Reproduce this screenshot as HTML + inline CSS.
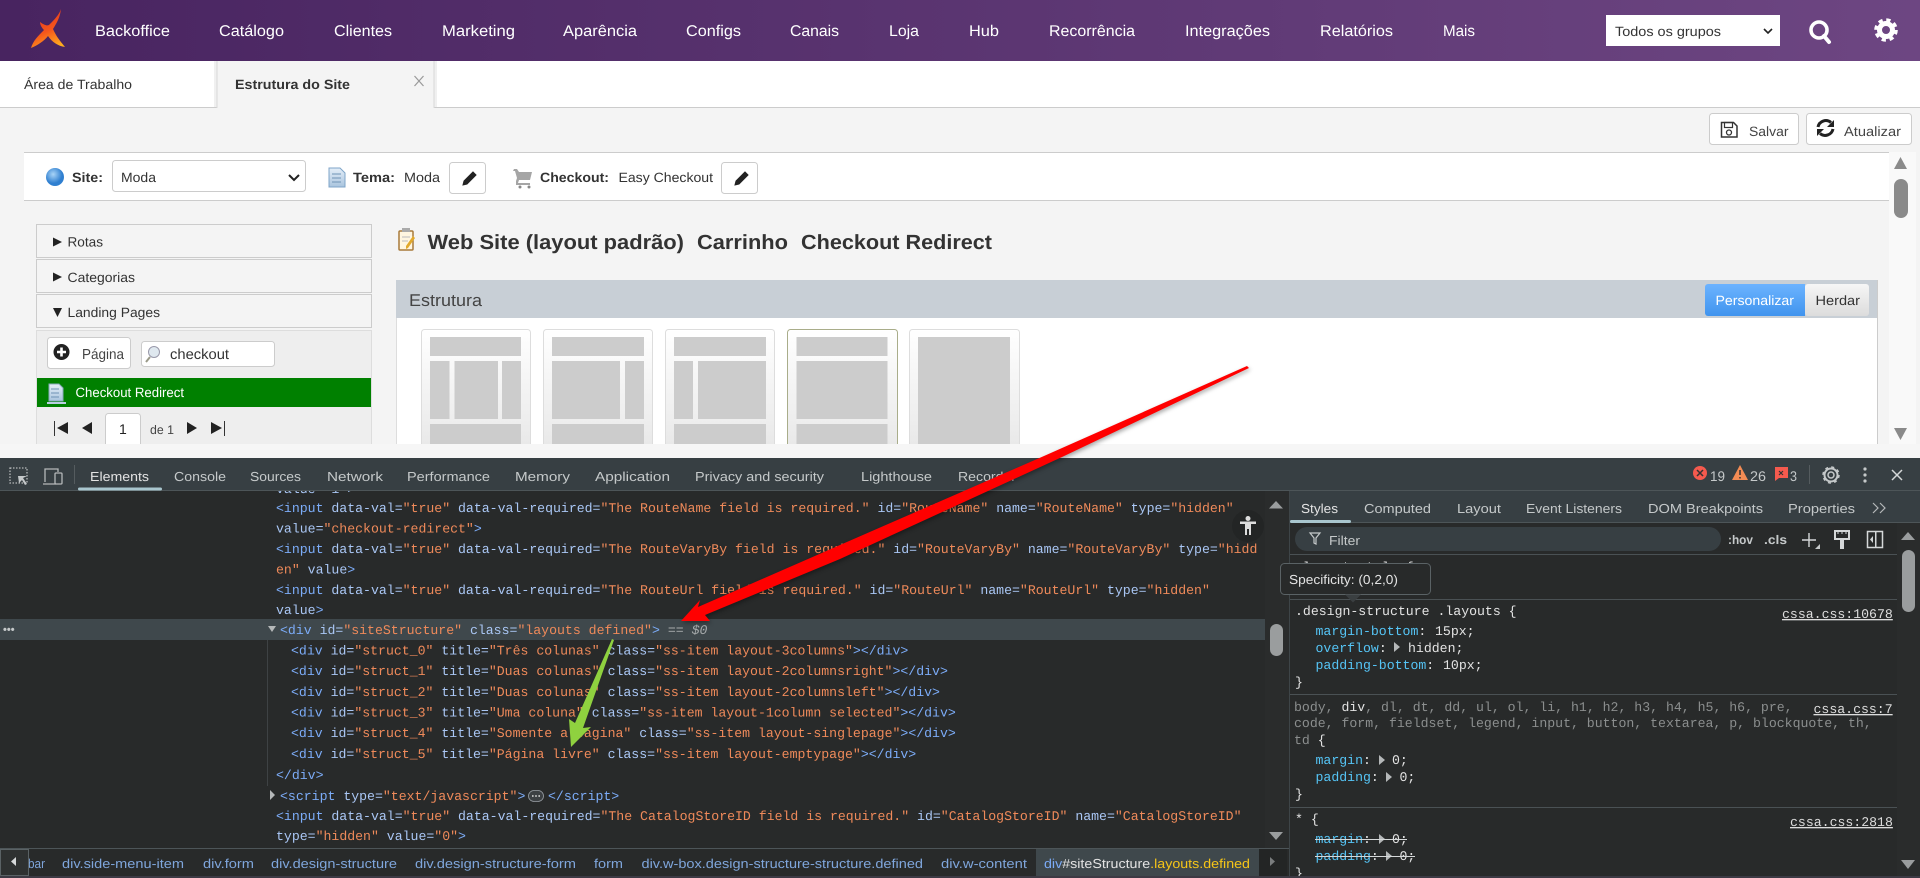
<!DOCTYPE html>
<html lang="pt"><head><meta charset="utf-8"><title>Estrutura do Site</title>
<style>
html,body{margin:0;padding:0;background:#f4f4f4;overflow:hidden}
svg{display:block;text-rendering:geometricPrecision}
text{font-family:"Liberation Sans",sans-serif;white-space:pre}
.n{fill:#fff;font-size:15.5px}
.d{fill:#333;font-size:13.5px}
.db{fill:#333;font-size:13.5px;font-weight:bold}
.t{fill:#c5c9ca;font-size:13px}
.c{fill:#7fa6dc;font-size:13px}
.m{font-family:"Liberation Mono",monospace;font-size:13.2px;fill:#aac7f5}
.b{fill:#7cacf8}.o{fill:#ef8a5a}.w{fill:#e3e3e3}.p{fill:#55c4f5}.g{fill:#8b8e8e}
.l{fill:#ddd;text-decoration:underline}
</style></head><body>
<svg xmlns="http://www.w3.org/2000/svg" width="1920" height="878" viewBox="0 0 1920 878">
<defs>
<linearGradient id="top" x1="0" x2="1" y1="0" y2="0"><stop offset="0" stop-color="#482460"/><stop offset="1" stop-color="#6d4682"/></linearGradient>
<linearGradient id="card" x1="0" x2="0" y1="0" y2="1"><stop offset="0" stop-color="#fff"/><stop offset="1" stop-color="#e6e6e6"/></linearGradient>
<linearGradient id="blue" x1="0" x2="0" y1="0" y2="1"><stop offset="0" stop-color="#6cb3ff"/><stop offset="1" stop-color="#4094ee"/></linearGradient>
<linearGradient id="grey" x1="0" x2="0" y1="0" y2="1"><stop offset="0" stop-color="#f6f6f6"/><stop offset="1" stop-color="#dcdcdc"/></linearGradient>
<linearGradient id="fl" x1=".3" x2=".7" y1="0" y2="1"><stop offset="0" stop-color="#e5341c"/><stop offset=".55" stop-color="#f4561c"/><stop offset="1" stop-color="#ffae1e"/></linearGradient>
<radialGradient id="globe" cx=".4" cy=".35"><stop offset="0" stop-color="#a9d4f7"/><stop offset="1" stop-color="#2f7fd0"/></radialGradient>
<linearGradient id="docg" x1="0" x2="0" y1="0" y2="1"><stop offset="0" stop-color="#e4eef8"/><stop offset="1" stop-color="#a9c4de"/></linearGradient>
</defs>

<!-- page -->
<rect width="1920" height="878" fill="#f4f4f4"/>
<rect width="1920" height="61" fill="url(#top)"/>
<path d="M61 9C60 18 56 24 53 29C56 36 60 41 65 47C58 46 52 42 48 36C44 41 38 45 31 48C33 41 38 36 44 30C42 28 40 25 40 22C44 25 47 26 49 25C54 20 59 15 61 9Z" fill="url(#fl)"/>
<g class="nav">
<text class="n" x="95" y="36" textLength="75" lengthAdjust="spacingAndGlyphs">Backoffice</text>
<text class="n" x="219" y="36" textLength="65" lengthAdjust="spacingAndGlyphs">Catálogo</text>
<text class="n" x="334" y="36" textLength="58" lengthAdjust="spacingAndGlyphs">Clientes</text>
<text class="n" x="442" y="36" textLength="73" lengthAdjust="spacingAndGlyphs">Marketing</text>
<text class="n" x="563" y="36" textLength="74" lengthAdjust="spacingAndGlyphs">Aparência</text>
<text class="n" x="686" y="36" textLength="55" lengthAdjust="spacingAndGlyphs">Configs</text>
<text class="n" x="790" y="36" textLength="49" lengthAdjust="spacingAndGlyphs">Canais</text>
<text class="n" x="889" y="36" textLength="30" lengthAdjust="spacingAndGlyphs">Loja</text>
<text class="n" x="969" y="36" textLength="30" lengthAdjust="spacingAndGlyphs">Hub</text>
<text class="n" x="1049" y="36" textLength="86" lengthAdjust="spacingAndGlyphs">Recorrência</text>
<text class="n" x="1185" y="36" textLength="85" lengthAdjust="spacingAndGlyphs">Integrações</text>
<text class="n" x="1320" y="36" textLength="73" lengthAdjust="spacingAndGlyphs">Relatórios</text>
<text class="n" x="1443" y="36" textLength="32" lengthAdjust="spacingAndGlyphs">Mais</text>
</g>
<rect x="1606" y="15" width="174" height="31" fill="#fff"/>
<text x="1615" y="36" font-size="13.5" fill="#333" textLength="106" lengthAdjust="spacingAndGlyphs">Todos os grupos</text>
<path d="M1764 29l4 4 4-4" fill="none" stroke="#222" stroke-width="1.6"/>
<circle cx="1819" cy="30" r="8" fill="none" stroke="#fff" stroke-width="3.6"/>
<path d="M1824 36l5 6" stroke="#fff" stroke-width="4" stroke-linecap="round"/>
<circle cx="1886" cy="30" r="6.5" fill="none" stroke="#fff" stroke-width="5"/>
<circle cx="1886" cy="30" r="10" fill="none" stroke="#fff" stroke-width="3.6" stroke-dasharray="4.2 3.65"/>

<!-- tab strip -->
<rect y="61" width="1920" height="46" fill="#fff"/>
<rect y="107" width="1920" height="1" fill="#ccc"/>
<text x="24" y="89" font-size="13.5" fill="#333" textLength="108" lengthAdjust="spacingAndGlyphs">Área de Trabalho</text>
<rect x="214" y="61" width="3" height="46" fill="#f0f0f0"/><rect x="434" y="61" width="3" height="46" fill="#f0f0f0"/>
<rect x="217" y="61" width="217" height="48" fill="#f4f4f4"/>
<rect x="216.500" y="61" width="1" height="47" fill="#d8d8d8"/><rect x="433.500" y="61" width="1" height="47" fill="#d8d8d8"/>
<text class="db" x="235" y="89" textLength="115" lengthAdjust="spacingAndGlyphs">Estrutura do Site</text>
<path d="M414.500 76l9 10m0-10l-9 10" stroke="#999" stroke-width="1.200"/>

<!-- save buttons -->
<rect x="1709.500" y="113.500" width="89" height="31" rx="3" fill="#fff" stroke="#ccc"/>
<rect x="1806.500" y="113.500" width="105" height="31" rx="3" fill="#fff" stroke="#ccc"/>
<path d="M1721.500 122.500h12l3.500 3.500v11h-15.500z" fill="none" stroke="#333" stroke-width="1.500"/>
<rect x="1724.500" y="122.500" width="8" height="5" fill="none" stroke="#333" stroke-width="1.200"/>
<circle cx="1729" cy="132.500" r="2.500" fill="none" stroke="#333" stroke-width="1.300"/>
<path d="M1818 127a8 8 0 0 1 13-4.500" fill="none" stroke="#222" stroke-width="3"/><path d="M1834 120v7h-7z" fill="#222"/>
<path d="M1833 129a8 8 0 0 1-13 4.500" fill="none" stroke="#222" stroke-width="3"/><path d="M1817 136v-7h7z" fill="#222"/>
<text x="1749" y="136" font-size="13.5" fill="#444" textLength="39.500" lengthAdjust="spacingAndGlyphs">Salvar</text>
<text x="1844" y="136" font-size="13.5" fill="#444" textLength="57" lengthAdjust="spacingAndGlyphs">Atualizar</text>

<!-- site panel -->
<rect x="24" y="152" width="1866" height="48" fill="#fff"/>
<rect x="24" y="152" width="1866" height="1" fill="#ccc"/><rect x="24" y="200" width="1866" height="1" fill="#ccc"/>
<rect x="1889" y="152" width="27" height="292" fill="#f9f9f9"/>
<circle cx="55" cy="177" r="9" fill="url(#globe)"/>
<text class="db" x="72" y="182" textLength="31" lengthAdjust="spacingAndGlyphs">Site:</text>
<rect x="112.500" y="160.500" width="193" height="31" rx="3" fill="#fff" stroke="#ccc"/>
<text class="d" x="121" y="182" textLength="35" lengthAdjust="spacingAndGlyphs">Moda</text>
<path d="M289 175l5 5 5-5" fill="none" stroke="#222" stroke-width="2"/>
<path d="M329 168h11l5 5v14h-16z" fill="url(#docg)" stroke="#7fa5c8"/><path d="M332 174h9M332 178h9M332 182h9" stroke="#6f93b5"/>
<text class="db" x="353" y="182" textLength="42" lengthAdjust="spacingAndGlyphs">Tema:</text>
<text class="d" x="404" y="182" textLength="36" lengthAdjust="spacingAndGlyphs">Moda</text>
<rect x="449.500" y="162.500" width="36" height="31" rx="3" fill="#fff" stroke="#ccc"/>
<path d="M473 172l3 3-9 9-4 1 1-4z" fill="#222" stroke="#222"/>
<path d="M514 169h3l2 3h13l-2 8h-11l-1 3h12v2h-14v-4l1-3-2-7h-2z" fill="#a5a5a5"/><circle cx="520" cy="187" r="1.500" fill="#888"/><circle cx="529" cy="187" r="1.500" fill="#888"/>
<text class="db" x="540" y="182" textLength="69" lengthAdjust="spacingAndGlyphs">Checkout:</text>
<text class="d" x="618.500" y="182" textLength="94.500" lengthAdjust="spacingAndGlyphs">Easy Checkout</text>
<rect x="721.500" y="162.500" width="36" height="31" rx="3" fill="#fff" stroke="#ccc"/>
<path d="M745 172l3 3-9 9-4 1 1-4z" fill="#222" stroke="#222"/>
<path d="M1894 169l6.500-12 6.500 12z" fill="#8a8a8a"/>
<rect x="1894" y="179" width="14" height="39" rx="7" fill="#8a8a8a"/>
<path d="M1894 428l6.500 12 6.500-12z" fill="#8a8a8a"/>

<!-- sidebar -->
<rect x="36.500" y="224.500" width="335" height="33" fill="#f4f4f4" stroke="#ccc"/>
<rect x="36.500" y="259.500" width="335" height="33" fill="#f4f4f4" stroke="#ccc"/>
<rect x="36.500" y="294.500" width="335" height="33" fill="#f4f4f4" stroke="#ccc"/>
<path d="M53 237.500l9 4.500-9 4.500z" fill="#222"/><path d="M53 272.500l9 4.500-9 4.500z" fill="#222"/><path d="M53 308l9 0-4.500 9z" fill="#222"/>
<text class="d" x="67.500" y="246.500" textLength="35.500" lengthAdjust="spacingAndGlyphs">Rotas</text>
<text class="d" x="67.500" y="282" textLength="67.500" lengthAdjust="spacingAndGlyphs">Categorias</text>
<text class="d" x="67.500" y="317" textLength="92.500" lengthAdjust="spacingAndGlyphs">Landing Pages</text>
<rect x="36.500" y="330.500" width="335" height="120" fill="#eee" stroke="#ddd"/>
<rect x="47.500" y="337.500" width="83" height="31" rx="3" fill="#fff" stroke="#ccc"/>
<circle cx="61.500" cy="352" r="8" fill="#222"/><path d="M57 352h9M61.500 347.500v9" stroke="#fff" stroke-width="2.600"/>
<text x="82" y="359" font-size="14.500" fill="#444" textLength="42" lengthAdjust="spacingAndGlyphs">Página</text>
<rect x="141.500" y="341.500" width="133" height="25" rx="3" fill="#fff" stroke="#ccc"/>
<circle cx="154" cy="352" r="5.500" fill="#dfe8ef" stroke="#99a"/><path d="M150 357l-4 5" stroke="#998" stroke-width="2"/>
<text x="170" y="359" font-size="14.500" fill="#333" textLength="59" lengthAdjust="spacingAndGlyphs">checkout</text>
<rect x="37" y="378" width="334" height="29" fill="#008000"/>
<path d="M49 384h10l4 4v13h-14z" fill="url(#docg)" stroke="#8ab"/><path d="M47 402h19v2h-19z" fill="#b9cfe0"/><path d="M51 389h8M51 393h8M51 397h8" stroke="#6f93b5"/>
<text x="75.500" y="397" font-size="13.500" fill="#fff" textLength="108.500" lengthAdjust="spacingAndGlyphs">Checkout Redirect</text>
<path d="M54.500 421v15" stroke="#333"/><path d="M68 422v12l-11-6z" fill="#222"/><path d="M92 422v12l-10-6z" fill="#222"/>
<rect x="105.500" y="413.500" width="35" height="40" rx="3" fill="#fff" stroke="#ccc"/>
<text x="119" y="434" font-size="14" fill="#222">1</text>
<text x="150" y="434" font-size="12.500" fill="#444" textLength="24" lengthAdjust="spacingAndGlyphs">de 1</text>
<path d="M187 422v12l10-6z" fill="#222"/><path d="M211 422v12l11-6z" fill="#222"/><path d="M224.500 421v15" stroke="#333"/>

<!-- main -->
<rect x="399" y="231" width="14" height="19" rx="1" fill="#fff6e0" stroke="#a87a3a" stroke-width="1.500"/>
<rect x="402" y="228" width="8" height="4" fill="#aaa"/><path d="M402 237h8M402 241h6" stroke="#bbb"/><path d="M415 238l-7 10-2 1 0-3 7-10z" fill="#e2a92c"/>
<text x="427.500" y="249" font-size="20.500" font-weight="bold" fill="#333" textLength="256.500" lengthAdjust="spacingAndGlyphs">Web Site (layout padrão)</text>
<text x="697" y="249" font-size="20.500" font-weight="bold" fill="#333" textLength="91" lengthAdjust="spacingAndGlyphs">Carrinho</text>
<text x="801" y="249" font-size="20.500" font-weight="bold" fill="#333" textLength="191" lengthAdjust="spacingAndGlyphs">Checkout Redirect</text>
<rect x="396" y="280" width="1481" height="170" fill="#fff"/>
<rect x="396" y="280" width="1481" height="38" fill="#c8cfd6"/>
<rect x="1877" y="280" width="1" height="170" fill="#ccc"/><rect x="396" y="318" width="1" height="130" fill="#ddd"/>
<text x="409" y="306" font-size="17" fill="#444" textLength="73" lengthAdjust="spacingAndGlyphs">Estrutura</text>
<rect x="1805" y="284" width="64" height="32" rx="3" fill="url(#grey)"/>
<path d="M1708 284h97v32h-97a3 3 0 0 1-3-3v-26a3 3 0 0 1 3-3z" fill="url(#blue)"/>
<text x="1715.500" y="305" font-size="13.500" fill="#fff" textLength="78.500" lengthAdjust="spacingAndGlyphs">Personalizar</text>
<text x="1815.500" y="305" font-size="13.500" fill="#333" textLength="44.500" lengthAdjust="spacingAndGlyphs">Herdar</text>

<g stroke="#ddd" fill="url(#card)">
<rect x="421.500" y="329.500" width="109" height="130" rx="3"/>
<rect x="543.500" y="329.500" width="109" height="130" rx="3"/>
<rect x="665.500" y="329.500" width="109" height="130" rx="3"/>
<rect x="787.500" y="329.500" width="110" height="130" rx="3" stroke="#a9ad8a"/>
<rect x="909.500" y="329.500" width="110" height="130" rx="3"/>
</g>
<g fill="#ccc">
<rect x="430" y="337" width="91" height="19"/><rect x="430" y="361" width="19.500" height="58"/><rect x="454.500" y="361" width="43.500" height="58"/><rect x="502" y="361" width="19" height="58"/><rect x="430" y="424" width="91" height="25"/>
<rect x="552" y="337" width="92" height="19"/><rect x="552" y="361" width="68" height="58"/><rect x="625" y="361" width="19" height="58"/><rect x="552" y="424" width="92" height="25"/>
<rect x="674" y="337" width="92" height="19"/><rect x="674" y="361" width="19" height="58"/><rect x="698" y="361" width="68" height="58"/><rect x="674" y="424" width="92" height="25"/>
<rect x="796.500" y="337" width="91" height="19"/><rect x="796.500" y="361" width="91" height="58"/><rect x="796.500" y="424" width="91" height="25"/>
<rect x="918" y="337" width="92" height="112"/>
</g>
<rect y="444" width="1889" height="14" fill="#f6f6f6"/>
<rect x="1889" y="444" width="31" height="14" fill="#f6f6f6"/>

<!-- devtools -->
<rect y="458" width="1920" height="420" fill="#282a2a"/>
<rect x="0" y="619" width="1265" height="21" fill="#3f484c"/>
<rect x="267" y="640" width="1" height="146" fill="#3e4244"/>
<text x="3" y="633" font-size="11" fill="#c5c9ca" font-weight="bold">•••</text>
<g class="code">
<text class="m" x="276" y="493">value="1"&gt;</text>
<text class="m" x="276" y="512"><tspan class="b">&lt;input</tspan> data-val=<tspan class="o">"true"</tspan> data-val-required=<tspan class="o">"The RouteName field is required."</tspan> id=<tspan class="o">"RouteName"</tspan> name=<tspan class="o">"RouteName"</tspan> type=<tspan class="o">"hidden"</tspan></text>
<text class="m" x="276" y="532.500">value=<tspan class="o">"checkout-redirect"</tspan><tspan class="b">&gt;</tspan></text>
<text class="m" x="276" y="553"><tspan class="b">&lt;input</tspan> data-val=<tspan class="o">"true"</tspan> data-val-required=<tspan class="o">"The RouteVaryBy field is required."</tspan> id=<tspan class="o">"RouteVaryBy"</tspan> name=<tspan class="o">"RouteVaryBy"</tspan> type=<tspan class="o">"hidd</tspan></text>
<text class="m" x="276" y="573.500"><tspan class="o">en"</tspan> value<tspan class="b">&gt;</tspan></text>
<text class="m" x="276" y="594"><tspan class="b">&lt;input</tspan> data-val=<tspan class="o">"true"</tspan> data-val-required=<tspan class="o">"The RouteUrl field is required."</tspan> id=<tspan class="o">"RouteUrl"</tspan> name=<tspan class="o">"RouteUrl"</tspan> type=<tspan class="o">"hidden"</tspan></text>
<text class="m" x="276" y="614">value<tspan class="b">&gt;</tspan></text>
<path d="M268 626h8l-4 6z" fill="#b5b8b9"/>
<text class="m" x="280" y="634"><tspan class="b">&lt;div</tspan> id=<tspan class="o">"siteStructure"</tspan> class=<tspan class="o">"layouts defined"</tspan><tspan class="b">&gt;</tspan> <tspan fill="#a8acad">==</tspan> <tspan fill="#a8acad" font-style="italic">$0</tspan></text>
<text class="m" x="291" y="654.500"><tspan class="b">&lt;div</tspan> id=<tspan class="o">"struct_0"</tspan> title=<tspan class="o">"Três colunas"</tspan> class=<tspan class="o">"ss-item layout-3columns"</tspan><tspan class="b">&gt;&lt;/div&gt;</tspan></text>
<text class="m" x="291" y="675"><tspan class="b">&lt;div</tspan> id=<tspan class="o">"struct_1"</tspan> title=<tspan class="o">"Duas colunas"</tspan> class=<tspan class="o">"ss-item layout-2columnsright"</tspan><tspan class="b">&gt;&lt;/div&gt;</tspan></text>
<text class="m" x="291" y="696"><tspan class="b">&lt;div</tspan> id=<tspan class="o">"struct_2"</tspan> title=<tspan class="o">"Duas colunas"</tspan> class=<tspan class="o">"ss-item layout-2columnsleft"</tspan><tspan class="b">&gt;&lt;/div&gt;</tspan></text>
<text class="m" x="291" y="716.500"><tspan class="b">&lt;div</tspan> id=<tspan class="o">"struct_3"</tspan> title=<tspan class="o">"Uma coluna"</tspan> class=<tspan class="o">"ss-item layout-1column selected"</tspan><tspan class="b">&gt;&lt;/div&gt;</tspan></text>
<text class="m" x="291" y="737"><tspan class="b">&lt;div</tspan> id=<tspan class="o">"struct_4"</tspan> title=<tspan class="o">"Somente a página"</tspan> class=<tspan class="o">"ss-item layout-singlepage"</tspan><tspan class="b">&gt;&lt;/div&gt;</tspan></text>
<text class="m" x="291" y="758"><tspan class="b">&lt;div</tspan> id=<tspan class="o">"struct_5"</tspan> title=<tspan class="o">"Página livre"</tspan> class=<tspan class="o">"ss-item layout-emptypage"</tspan><tspan class="b">&gt;&lt;/div&gt;</tspan></text>
<text class="m b" x="276" y="779">&lt;/div&gt;</text>
<path d="M270 790v10l5-5z" fill="#b5b8b9"/>
<text class="m" x="280" y="800"><tspan class="b">&lt;script</tspan> type=<tspan class="o">"text/javascript"</tspan><tspan class="b">&gt;</tspan></text>
<rect x="528.500" y="790.500" width="15" height="11" rx="5.500" fill="#3c4043" stroke="#9aa0a6" stroke-width=".8"/>
<path d="M532 796h8" stroke="#ddd" stroke-width="1.600" stroke-dasharray="1.600 1.600"/>
<text class="m b" x="548" y="800">&lt;/script&gt;</text>
<text class="m" x="276" y="820"><tspan class="b">&lt;input</tspan> data-val=<tspan class="o">"true"</tspan> data-val-required=<tspan class="o">"The CatalogStoreID field is required."</tspan> id=<tspan class="o">"CatalogStoreID"</tspan> name=<tspan class="o">"CatalogStoreID"</tspan></text>
<text class="m" x="276" y="840">type=<tspan class="o">"hidden"</tspan> value=<tspan class="o">"0"</tspan><tspan class="b">&gt;</tspan></text>
</g>
<!-- element scrollbar -->
<rect x="1265" y="491" width="24" height="357" fill="#2a2c2c"/>
<path d="M1269 508.500l7-7.500 7 7.500z" fill="#9a9d9e"/><rect x="1270" y="624" width="13" height="32" rx="6.500" fill="#9a9d9e"/><path d="M1269 832l7 8 7-8z" fill="#9a9d9e"/>
<circle cx="1248" cy="526" r="16" fill="#232525"/>
<circle cx="1248" cy="518.500" r="2.500" fill="#ddd"/><path d="M1240 521.500h16v2.500h-5v11h-2v-6h-2v6h-2v-11h-5z" fill="#ddd"/>

<!-- tab bar -->
<rect y="458" width="1920" height="32" fill="#373f43"/>
<rect y="490" width="1920" height="1" fill="#4d5558"/>
<rect x="78" y="487.500" width="84" height="3" rx="1.500" fill="#a9c6ce"/>
<rect x="10" y="468" width="17" height="15" fill="none" stroke="#b5b8b9" stroke-dasharray="1.500 1.500" stroke-width="1.300"/>
<path d="M18 476l9 0-4 2 4 6-2 1-3-5-3 3z" fill="#c5c9ca"/>
<path d="M45 482v-13h13v3M43 484h13" fill="none" stroke="#b5b8b9" stroke-width="1.300"/><rect x="55" y="473" width="7" height="11" rx="1" fill="none" stroke="#b5b8b9" stroke-width="1.300"/>
<rect x="74" y="465" width="1" height="19" fill="#555c5f"/>
<text class="t" x="90" y="481" textLength="59" lengthAdjust="spacingAndGlyphs" style="fill:#e3e3e3">Elements</text>
<text class="t" x="174" y="481" textLength="52" lengthAdjust="spacingAndGlyphs">Console</text>
<text class="t" x="250" y="481" textLength="51" lengthAdjust="spacingAndGlyphs">Sources</text>
<text class="t" x="327" y="481" textLength="56" lengthAdjust="spacingAndGlyphs">Network</text>
<text class="t" x="407" y="481" textLength="83" lengthAdjust="spacingAndGlyphs">Performance</text>
<text class="t" x="515" y="481" textLength="55" lengthAdjust="spacingAndGlyphs">Memory</text>
<text class="t" x="595" y="481" textLength="75" lengthAdjust="spacingAndGlyphs">Application</text>
<text class="t" x="695" y="481" textLength="129" lengthAdjust="spacingAndGlyphs">Privacy and security</text>
<text class="t" x="861" y="481" textLength="71" lengthAdjust="spacingAndGlyphs">Lighthouse</text>
<text class="t" x="958" y="481" textLength="58" lengthAdjust="spacingAndGlyphs">Recorder</text>

<circle cx="1700" cy="473" r="7" fill="#f55a4e"/><path d="M1697 470l6 6m0-6l-6 6" stroke="#333" stroke-width="1.500"/>
<text class="t" x="1710" y="481" style="font-size:14px" textLength="15" lengthAdjust="spacingAndGlyphs">19</text>
<path d="M1740 465l8 15h-16z" fill="#f28b54"/><path d="M1740 470v5m0 2v1.500" stroke="#333" stroke-width="1.500"/>
<text class="t" x="1750" y="481" style="font-size:14px" textLength="16" lengthAdjust="spacingAndGlyphs">26</text>
<path d="M1775 467h13v11h-9l-4 3z" fill="#f55a4e"/><path d="M1779 471l4 4m0-4l-4 4" stroke="#333" stroke-width="1.200"/>
<text class="t" x="1790" y="481" style="font-size:14px" textLength="7" lengthAdjust="spacingAndGlyphs">3</text>
<rect x="1809" y="465" width="1" height="19" fill="#555c5f"/>
<circle cx="1831" cy="475" r="3" fill="none" stroke="#c5c9ca" stroke-width="1.500"/><circle cx="1831" cy="475" r="6.500" fill="none" stroke="#c5c9ca" stroke-width="2"/><circle cx="1831" cy="475" r="8" fill="none" stroke="#c5c9ca" stroke-width="1.500" stroke-dasharray="3 3.280"/>
<circle cx="1865" cy="469" r="1.600" fill="#c5c9ca"/><circle cx="1865" cy="475" r="1.600" fill="#c5c9ca"/><circle cx="1865" cy="481" r="1.600" fill="#c5c9ca"/>
<path d="M1892 470l10 10m0-10l-10 10" stroke="#d5d8d9" stroke-width="1.500"/>

<!-- styles pane -->
<rect x="1289" y="491" width="631" height="385" fill="#282a2a"/>
<rect x="1289" y="491" width="1" height="385" fill="#3e4548"/>
<rect x="1290" y="491" width="630" height="31" fill="#373f43"/>
<rect x="1290" y="522" width="630" height="1" fill="#4d5558"/>
<rect x="1290" y="520" width="61" height="3" rx="1.500" fill="#a9c6ce"/>
<text class="t" x="1301" y="513" textLength="37" lengthAdjust="spacingAndGlyphs" style="fill:#e3e3e3">Styles</text>
<text class="t" x="1364" y="513" textLength="67" lengthAdjust="spacingAndGlyphs">Computed</text>
<text class="t" x="1457" y="513" textLength="44" lengthAdjust="spacingAndGlyphs">Layout</text>
<text class="t" x="1526" y="513" textLength="96" lengthAdjust="spacingAndGlyphs">Event Listeners</text>
<text class="t" x="1648" y="513" textLength="115" lengthAdjust="spacingAndGlyphs">DOM Breakpoints</text>
<text class="t" x="1788" y="513" textLength="67" lengthAdjust="spacingAndGlyphs">Properties</text>
<path d="M1873 503l5 5-5 5m7-10l5 5-5 5" fill="none" stroke="#b5b8b9" stroke-width="1.200"/>
<rect x="1295" y="527" width="426" height="24" rx="12" fill="#373f43"/>
<path d="M1310 533h10l-4 5v6l-2-1v-5z" fill="none" stroke="#c5c9ca" stroke-width="1.200"/>
<text class="t" x="1329" y="545" textLength="31" lengthAdjust="spacingAndGlyphs">Filter</text>
<text x="1728" y="544" font-size="12.500" font-weight="bold" fill="#c5c9ca" textLength="25" lengthAdjust="spacingAndGlyphs">:hov</text>
<text x="1764" y="544" font-size="12.500" font-weight="bold" fill="#c5c9ca" textLength="23" lengthAdjust="spacingAndGlyphs">.cls</text>
<path d="M1802 540h14M1809 533v14" stroke="#d5d8d9" stroke-width="1.400"/><path d="M1820 544v5h-5z" fill="#c5c9ca"/>
<path d="M1835 531h14v8h-14z" fill="none" stroke="#d5d8d9" stroke-width="2"/><path d="M1838 531v3m4-3v3m4-3v3" stroke="#d5d8d9"/><rect x="1840" y="540" width="4" height="9" fill="#d5d8d9"/>
<rect x="1867.500" y="531.500" width="15" height="16" fill="none" stroke="#d5d8d9" stroke-width="1.500"/><rect x="1875" y="532" width="1.500" height="15" fill="#d5d8d9"/><path d="M1873 536v7l-3-3.500z" fill="#d5d8d9"/>
<rect x="1290" y="554" width="607" height="1" fill="#4a5154"/>
<rect x="1897" y="523" width="23" height="353" fill="#2a2c2c"/>
<path d="M1901 540l7-8 7 8z" fill="#9a9d9e"/><rect x="1902" y="550" width="13" height="62" rx="6.500" fill="#9a9d9e"/><path d="M1901 860l7 9 7-9z" fill="#9a9d9e"/>

<text class="m w" x="1295" y="571">element.style {</text>
<rect x="1290" y="564" width="607" height="35" fill="#282a2a"/>
<rect x="1290" y="599" width="607" height="1" fill="#4a5154"/>

<text class="m w" x="1295" y="615">.design-structure .layouts {</text>
<text class="m l" x="1782" y="618">cssa.css:10678</text>
<text class="m" x="1315.500" y="635"><tspan class="p">margin-bottom</tspan><tspan class="w">: </tspan><tspan class="w" x="1435">15px;</tspan></text>
<text class="m" x="1315.500" y="652"><tspan class="p">overflow</tspan><tspan class="w">: </tspan><tspan class="w" x="1408">hidden;</tspan></text>
<path d="M1394 642v10l6-5z" fill="#b5b8b9"/>
<text class="m" x="1315.500" y="669"><tspan class="p">padding-bottom</tspan><tspan class="w">: </tspan><tspan class="w" x="1443">10px;</tspan></text>
<text class="m w" x="1295" y="686">}</text>
<rect x="1290" y="694" width="607" height="1" fill="#4a5154"/>
<text class="m g" x="1294" y="711"><tspan>body, </tspan><tspan class="w">div</tspan><tspan>, dl, dt, dd, ul, ol, li, h1, h2, h3, h4, h5, h6, pre,</tspan></text>
<text class="m l" x="1813.500" y="713">cssa.css:7</text>
<text class="m g" x="1294" y="727">code, form, fieldset, legend, input, button, textarea, p, blockquote, th,</text>
<text class="m g" x="1294" y="744">td <tspan class="w">{</tspan></text>
<text class="m" x="1315.500" y="764"><tspan class="p">margin</tspan><tspan class="w">: </tspan><tspan class="w" x="1392">0;</tspan></text>
<path d="M1379 755v10l6-5z" fill="#b5b8b9"/>
<text class="m" x="1315.500" y="781"><tspan class="p">padding</tspan><tspan class="w">: </tspan><tspan class="w" x="1399.500">0;</tspan></text>
<path d="M1386 772v10l6-5z" fill="#b5b8b9"/>
<text class="m w" x="1295" y="798">}</text>
<rect x="1290" y="807" width="607" height="1" fill="#4a5154"/>
<text class="m w" x="1295" y="823">* {</text>
<text class="m l" x="1790" y="826">cssa.css:2818</text>
<text class="m" x="1315.500" y="843"><tspan class="p">margin</tspan><tspan class="w">: </tspan><tspan class="w" x="1392">0;</tspan></text>
<path d="M1379 834v10l6-5z" fill="#b5b8b9"/><rect x="1315" y="839" width="92" height="1" fill="#d5d8d9"/>
<text class="m" x="1315.500" y="860"><tspan class="p">padding</tspan><tspan class="w">: </tspan><tspan class="w" x="1399.500">0;</tspan></text>
<path d="M1386 851v10l6-5z" fill="#b5b8b9"/><rect x="1315" y="856" width="100" height="1" fill="#d5d8d9"/>
<text class="m w" x="1295" y="877">}</text>

<!-- tooltip -->
<rect x="1280.500" y="563.500" width="150" height="31" rx="4" fill="#282a2a" stroke="#5a6265"/>
<path d="M1345 594.500l8 8 8-8z" fill="#3a3f41"/>
<text x="1289" y="584" font-size="13" fill="#e3e3e3" textLength="109" lengthAdjust="spacingAndGlyphs">Specificity: (0,2,0)</text>

<!-- breadcrumb -->
<rect y="848" width="1289" height="28" fill="#282a2a"/>
<rect y="848" width="1289" height="1" fill="#4d5558"/>
<text class="c" x="28" y="868" textLength="17" lengthAdjust="spacingAndGlyphs">bar</text>
<rect x=".5" y="849.500" width="28" height="26" fill="#2e3131" stroke="#5a6265"/>
<path d="M16 857v9l-5-4.500z" fill="#d5d8d9"/>
<text class="c" x="62" y="868" textLength="122" lengthAdjust="spacingAndGlyphs">div.side-menu-item</text>
<text class="c" x="203" y="868" textLength="51" lengthAdjust="spacingAndGlyphs">div.form</text>
<text class="c" x="271" y="868" textLength="126" lengthAdjust="spacingAndGlyphs">div.design-structure</text>
<text class="c" x="415" y="868" textLength="161" lengthAdjust="spacingAndGlyphs">div.design-structure-form</text>
<text class="c" x="594" y="868" textLength="29" lengthAdjust="spacingAndGlyphs">form</text>
<text class="c" x="641.500" y="868" textLength="281.500" lengthAdjust="spacingAndGlyphs">div.w-box.design-structure-structure.defined</text>
<text class="c" x="941" y="868" textLength="86" lengthAdjust="spacingAndGlyphs">div.w-content</text>
<rect x="1036" y="849" width="223" height="27" fill="#3f484c"/>
<text class="c" x="1044" y="868" textLength="206" lengthAdjust="spacingAndGlyphs"><tspan fill="#7cacf8">div</tspan><tspan fill="#e3e3e3">#siteStructure</tspan><tspan fill="#f5c518">.layouts.defined</tspan></text>
<rect x="1259" y="849" width="28" height="27" fill="#232525"/>
<path d="M1270 857v9l5-4.500z" fill="#7a7d7e"/>
<rect y="876" width="1920" height="2" fill="#3c3a44"/>

<!-- annotation arrows -->
<g style="filter:drop-shadow(1px 2px 2px rgba(0,0,0,.35))">
<path d="M1247 366L1044 456L698 607L700 600L681 621L710 621L705 615L840 559L1062 457L1249 368Z" fill="#ff0000"/>
</g>
<path d="M612 639L614 640L583 728L591 727L571 747L569 719L575 723Z" fill="#8fd13f"/>
</svg>
</body></html>
